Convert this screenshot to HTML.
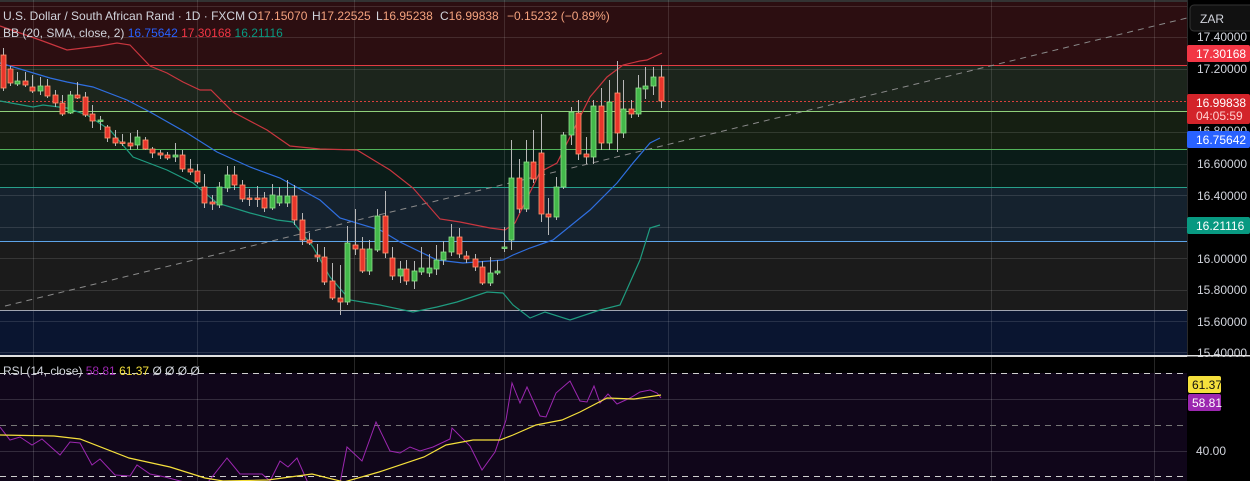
<!DOCTYPE html>
<html><head><meta charset="utf-8"><style>
html,body{margin:0;padding:0;background:#000;width:1250px;height:481px;overflow:hidden;font-family:"Liberation Sans",sans-serif}
svg{position:absolute;left:0;top:0}
.t{font-size:12px;fill:#d1d4dc}
.o{font-size:12px;fill:#f4a27e}
</style></head><body>
<svg width="1250" height="481" viewBox="0 0 1250 481" xmlns="http://www.w3.org/2000/svg">
<rect x="0" y="0" width="1187" height="65" fill="#2c0e11"/>
<rect x="0" y="65" width="1187" height="46" fill="#1c251c"/>
<rect x="0" y="111" width="1187" height="38" fill="#151f12"/>
<rect x="0" y="149" width="1187" height="38" fill="#0a1c18"/>
<rect x="0" y="187" width="1187" height="54" fill="#15222e"/>
<rect x="0" y="241" width="1187" height="69" fill="#1b1b1b"/>
<rect x="0" y="310" width="1187" height="45" fill="#0a1530"/>
<rect x="0" y="0" width="1250" height="2" fill="#333"/>
<g stroke="#ffffff" stroke-opacity="0.12" stroke-width="1">
<line x1="0" y1="6.5" x2="1187" y2="6.5"/><line x1="0" y1="37.5" x2="1187" y2="37.5"/><line x1="0" y1="69.5" x2="1187" y2="69.5"/><line x1="0" y1="132.5" x2="1187" y2="132.5"/><line x1="0" y1="164.5" x2="1187" y2="164.5"/><line x1="0" y1="195.5" x2="1187" y2="195.5"/><line x1="0" y1="227.5" x2="1187" y2="227.5"/><line x1="0" y1="258.5" x2="1187" y2="258.5"/><line x1="0" y1="290.5" x2="1187" y2="290.5"/><line x1="0" y1="321.5" x2="1187" y2="321.5"/><line x1="0" y1="352.5" x2="1187" y2="352.5"/>
<line x1="33.5" y1="0" x2="33.5" y2="481"/><line x1="197.5" y1="0" x2="197.5" y2="481"/><line x1="354.5" y1="0" x2="354.5" y2="481"/><line x1="504.5" y1="0" x2="504.5" y2="481"/><line x1="668.5" y1="0" x2="668.5" y2="481"/><line x1="991.5" y1="0" x2="991.5" y2="481"/><line x1="1154.5" y1="0" x2="1154.5" y2="481"/>
</g>
<line x1="0" y1="65.5" x2="1187" y2="65.5" stroke="#e33b43"/>
<line x1="0" y1="101.5" x2="1187" y2="101.5" stroke="#d8403c" stroke-dasharray="2 2"/>
<line x1="0" y1="111.5" x2="1187" y2="111.5" stroke="#8fd07a"/>
<line x1="0" y1="149.5" x2="1187" y2="149.5" stroke="#52b35a"/>
<line x1="0" y1="187.5" x2="1187" y2="187.5" stroke="#27a08a"/>
<line x1="0" y1="241.5" x2="1187" y2="241.5" stroke="#5ea4e8"/>
<line x1="0" y1="310.5" x2="1187" y2="310.5" stroke="#a0a4b0"/>
<line x1="5" y1="306" x2="1187" y2="18" stroke="#8a8a8a" stroke-dasharray="6 5"/>
<polyline fill="none" stroke="#c9363f" stroke-width="1.2" points="0,26 40,40 67,50 100,46 117,43 130,45 150,66 167,73 183,82 200,90 211,90 233,112 267,130 290,146 320,149 357,150 390,170 413,188 440,219 460,222 490,228 505,230 515,223 540,172 557,163 590,97 607,77 623,65 640,61 647,60 662,53"/>
<polyline fill="none" stroke="#2f6fe0" stroke-width="1.2" points="0,63 50,78 67,82 93,87 127,100 150,112 187,133 217,152 250,167 280,178 320,200 340,218 380,230 400,242 437,260 463,263 503,260 513,255 530,248 553,240 590,210 617,183 633,163 650,143 660,138"/>
<polyline fill="none" stroke="#1f9c80" stroke-width="1.2" points="0,101 33,107 43,105 67,108 87,115 110,130 133,157 167,170 193,183 217,203 250,213 277,220 293,222 313,247 330,277 350,300 380,305 413,312 437,307 457,302 487,292 503,293 513,305 530,318 545,312 570,320 600,310 620,305 640,260 650,228 660,225"/>
<g id="c"></g>
<rect x="0" y="355" width="1187" height="2" fill="#e0e0e0"/>
<rect x="0" y="357" width="1187" height="124" fill="#000"/>
<rect x="0" y="373" width="1187" height="108" fill="#10061a"/>
<g stroke="#ffffff" stroke-opacity="0.15"><line x1="0" y1="399.5" x2="1187" y2="399.5"/><line x1="0" y1="451.5" x2="1187" y2="451.5"/>
<line x1="33.5" y1="357" x2="33.5" y2="481"/><line x1="197.5" y1="357" x2="197.5" y2="481"/><line x1="354.5" y1="357" x2="354.5" y2="481"/><line x1="504.5" y1="357" x2="504.5" y2="481"/><line x1="668.5" y1="357" x2="668.5" y2="481"/><line x1="991.5" y1="357" x2="991.5" y2="481"/><line x1="1154.5" y1="357" x2="1154.5" y2="481"/></g>
<line x1="0" y1="373.5" x2="1187" y2="373.5" stroke="#cfcfcf" stroke-dasharray="6 5"/>
<line x1="0" y1="425.5" x2="1187" y2="425.5" stroke="#777" stroke-dasharray="6 5"/>
<line x1="0" y1="476.5" x2="1187" y2="476.5" stroke="#cfcfcf" stroke-dasharray="6 5"/>
<polyline fill="none" stroke="#9c27b0" stroke-width="1" points="0,427 10,440 20,437 32,445 42,439 60,455 70,442 80,443 92,465 100,459 115,475 130,476 137,465 150,474 165,477 180,481 205,486 227,458 240,474 262,474 270,481 280,461 288,467 297,458 308,483 340,483 347,447 362,461 376,422 390,451 400,453 410,447 420,451 433,447 450,439 452,428 470,446 482,470 495,452 506,420 512,383 520,403 527,387 540,416 546,417 556,393 570,381 580,401 587,402 594,386 600,403 608,394 617,404 630,398 640,392 650,390 657,393 661,398"/>
<polyline fill="none" stroke="#f5e03c" stroke-width="1.2" points="0,435 54,436 80,439 129,458 170,467 205,478 223,481 268,480 312,474 344,482 379,472 424,457 446,445 473,440 500,440 513,435 536,425 562,420 580,412 607,398 634,399 661,395"/>
<text x="3" y="20" class="t">U.S. Dollar / South African Rand · 1D · FXCM</text>
<text x="248" y="20" class="t">O<tspan class="o">17.15070</tspan></text>
<text x="312" y="20" class="t">H<tspan class="o">17.22525</tspan></text>
<text x="376" y="20" class="t">L<tspan class="o">16.95238</tspan></text>
<text x="440" y="20" class="t">C<tspan class="o">16.99838</tspan></text>
<text x="507" y="20" class="o">−0.15232 (−0.89%)</text>
<text x="3" y="37" class="t">BB (20, SMA, close, 2) <tspan fill="#2962ff">16.75642</tspan> <tspan fill="#f23645">17.30168</tspan> <tspan fill="#089981">16.21116</tspan></text>
<text x="3" y="375" class="t">RSI (14, close) <tspan fill="#9c27b0">58.81</tspan> <tspan fill="#f5e03c">61.37</tspan> Ø Ø Ø Ø</text>
<rect x="1187" y="0" width="63" height="481" fill="#000"/>
<line x1="1187.5" y1="0" x2="1187.5" y2="481" stroke="#2a2a2a"/>
<rect x="1190" y="5" width="64" height="26" rx="4" fill="#111" stroke="#333"/>
<text x="1200" y="23" class="t">ZAR</text>
<text x="1197" y="41" class="t">17.40000</text><text x="1197" y="73" class="t">17.20000</text><text x="1197" y="135" class="t">16.80000</text><text x="1197" y="168" class="t">16.60000</text><text x="1197" y="200" class="t">16.40000</text><text x="1197" y="263" class="t">16.00000</text><text x="1197" y="294" class="t">15.80000</text><text x="1197" y="326" class="t">15.60000</text><text x="1197" y="357" class="t">15.40000</text>
<rect x="1187" y="355" width="63" height="1.5" fill="#e0e0e0"/>
<rect x="1187" y="357" width="63" height="124" fill="#000"/>
<rect x="1187" y="45" width="63" height="17" rx="2" fill="#f23645"/><text x="1196" y="58" class="t" style="fill:#fff">17.30168</text>
<rect x="1187" y="94" width="63" height="30" rx="2" fill="#d3242a"/><text x="1196" y="107" class="t" style="fill:#fff">16.99838</text><text x="1196" y="120" class="t" style="fill:#ffd0d0">04:05:59</text>
<rect x="1187" y="131" width="63" height="17" rx="2" fill="#2962ff"/><text x="1196" y="144" class="t" style="fill:#fff">16.75642</text>
<rect x="1187" y="217" width="63" height="17" rx="2" fill="#089981"/><text x="1196" y="230" class="t" style="fill:#fff">16.21116</text>
<rect x="1188" y="376" width="33" height="17" rx="2" fill="#f5e03c"/><text x="1192" y="389" class="t" style="fill:#111">61.37</text>
<rect x="1188" y="394" width="33" height="17" rx="2" fill="#9c27b0"/><text x="1192" y="407" class="t" style="fill:#fff">58.81</text>
<text x="1196" y="455" class="t">40.00</text>
</svg>
<script>
var d=[[3,55,88,48,91,'r'],[10,69,83,66,86,'r'],[17,81,84,72,86,'g'],[25,81,85,72,87,'r'],[32,87,91,75,93,'r'],[40,86,91,77,95,'g'],[47,86,96,79,98,'r'],[55,95,103,90,107,'r'],[62,103,114,95,116,'r'],[70,95,113,91,114,'g'],[77,95,98,82,99,'r'],[85,97,115,92,117,'r'],[92,114,121,105,128,'r'],[100,120,121,116,130,'g'],[107,127,138,125,142,'r'],[115,138,143,130,146,'r'],[122,142,143,134,146,'r'],[130,143,146,133,150,'r'],[137,137,145,130,149,'g'],[145,140,149,137,150,'r'],[152,149,153,147,158,'r'],[160,153,155,150,159,'r'],[167,155,158,152,160,'r'],[175,155,157,143,162,'g'],[182,155,169,150,172,'r'],[190,169,172,159,175,'r'],[197,171,182,164,184,'r'],[204,187,203,174,208,'r'],[212,202,204,195,210,'r'],[219,187,205,182,208,'g'],[227,175,188,166,192,'g'],[234,175,185,166,190,'r'],[242,185,199,180,202,'r'],[249,198,199,189,206,'r'],[257,198,199,186,207,'r'],[264,198,208,192,212,'r'],[272,195,208,184,210,'g'],[279,196,203,187,206,'g'],[287,196,203,180,207,'g'],[294,196,220,185,225,'r'],[302,220,240,213,245,'r'],[309,240,243,233,245,'r'],[317,255,257,244,262,'r'],[324,257,282,247,285,'r'],[332,281,298,263,300,'r'],[340,298,302,265,315,'r'],[347,243,302,226,305,'g'],[355,245,249,209,255,'r'],[362,249,271,237,273,'r'],[369,249,271,240,275,'g'],[377,216,250,209,252,'g'],[385,216,253,191,258,'r'],[392,258,276,247,280,'r'],[400,269,276,261,283,'g'],[406,269,281,260,285,'r'],[414,271,281,261,289,'g'],[421,268,272,247,275,'g'],[429,268,273,254,277,'g'],[436,260,269,245,275,'g'],[443,252,260,241,265,'g'],[451,237,252,224,256,'g'],[459,237,254,228,258,'r'],[466,256,259,251,263,'r'],[475,259,267,254,271,'r'],[482,267,283,261,285,'r'],[490,273,283,257,286,'g'],[497,271,273,260,275,'g'],[504,247,248,227,252,'g'],[511,178,240,140,250,'g'],[519,178,209,159,213,'r'],[526,162,209,140,212,'g'],[533,162,179,130,183,'r'],[541,153,214,114,222,'r'],[548,214,217,198,235,'r'],[556,187,217,177,220,'g'],[563,135,187,132,189,'g'],[571,112,135,107,145,'g'],[578,113,154,100,160,'r'],[586,154,157,137,164,'r'],[593,106,157,100,164,'g'],[601,106,143,88,150,'r'],[609,102,143,80,150,'g'],[617,93,133,61,152,'r'],[623,109,133,80,138,'g'],[631,109,114,100,118,'r'],[638,88,114,75,117,'g'],[645,86,89,67,99,'g'],[653,77,86,67,95,'g'],[661,77,101,65,108,'r']];
var s='';d.forEach(function(c){var f=c[5]=='r'?'#e8352b':'#43b84a',st=c[5]=='r'?'#ff9a72':'#8fe08a';var h=Math.max(c[2]-c[1],1.5);
s+='<line x1="'+(c[0]+.5)+'" y1="'+c[3]+'" x2="'+(c[0]+.5)+'" y2="'+c[4]+'" stroke="#b8b8b8" stroke-width="1"/>';
s+='<rect x="'+(c[0]-2)+'" y="'+c[1]+'" width="5" height="'+h+'" fill="'+f+'" stroke="'+st+'" stroke-width="0.8"/>';});
document.getElementById('c').innerHTML=s;
</script>
</body></html>
